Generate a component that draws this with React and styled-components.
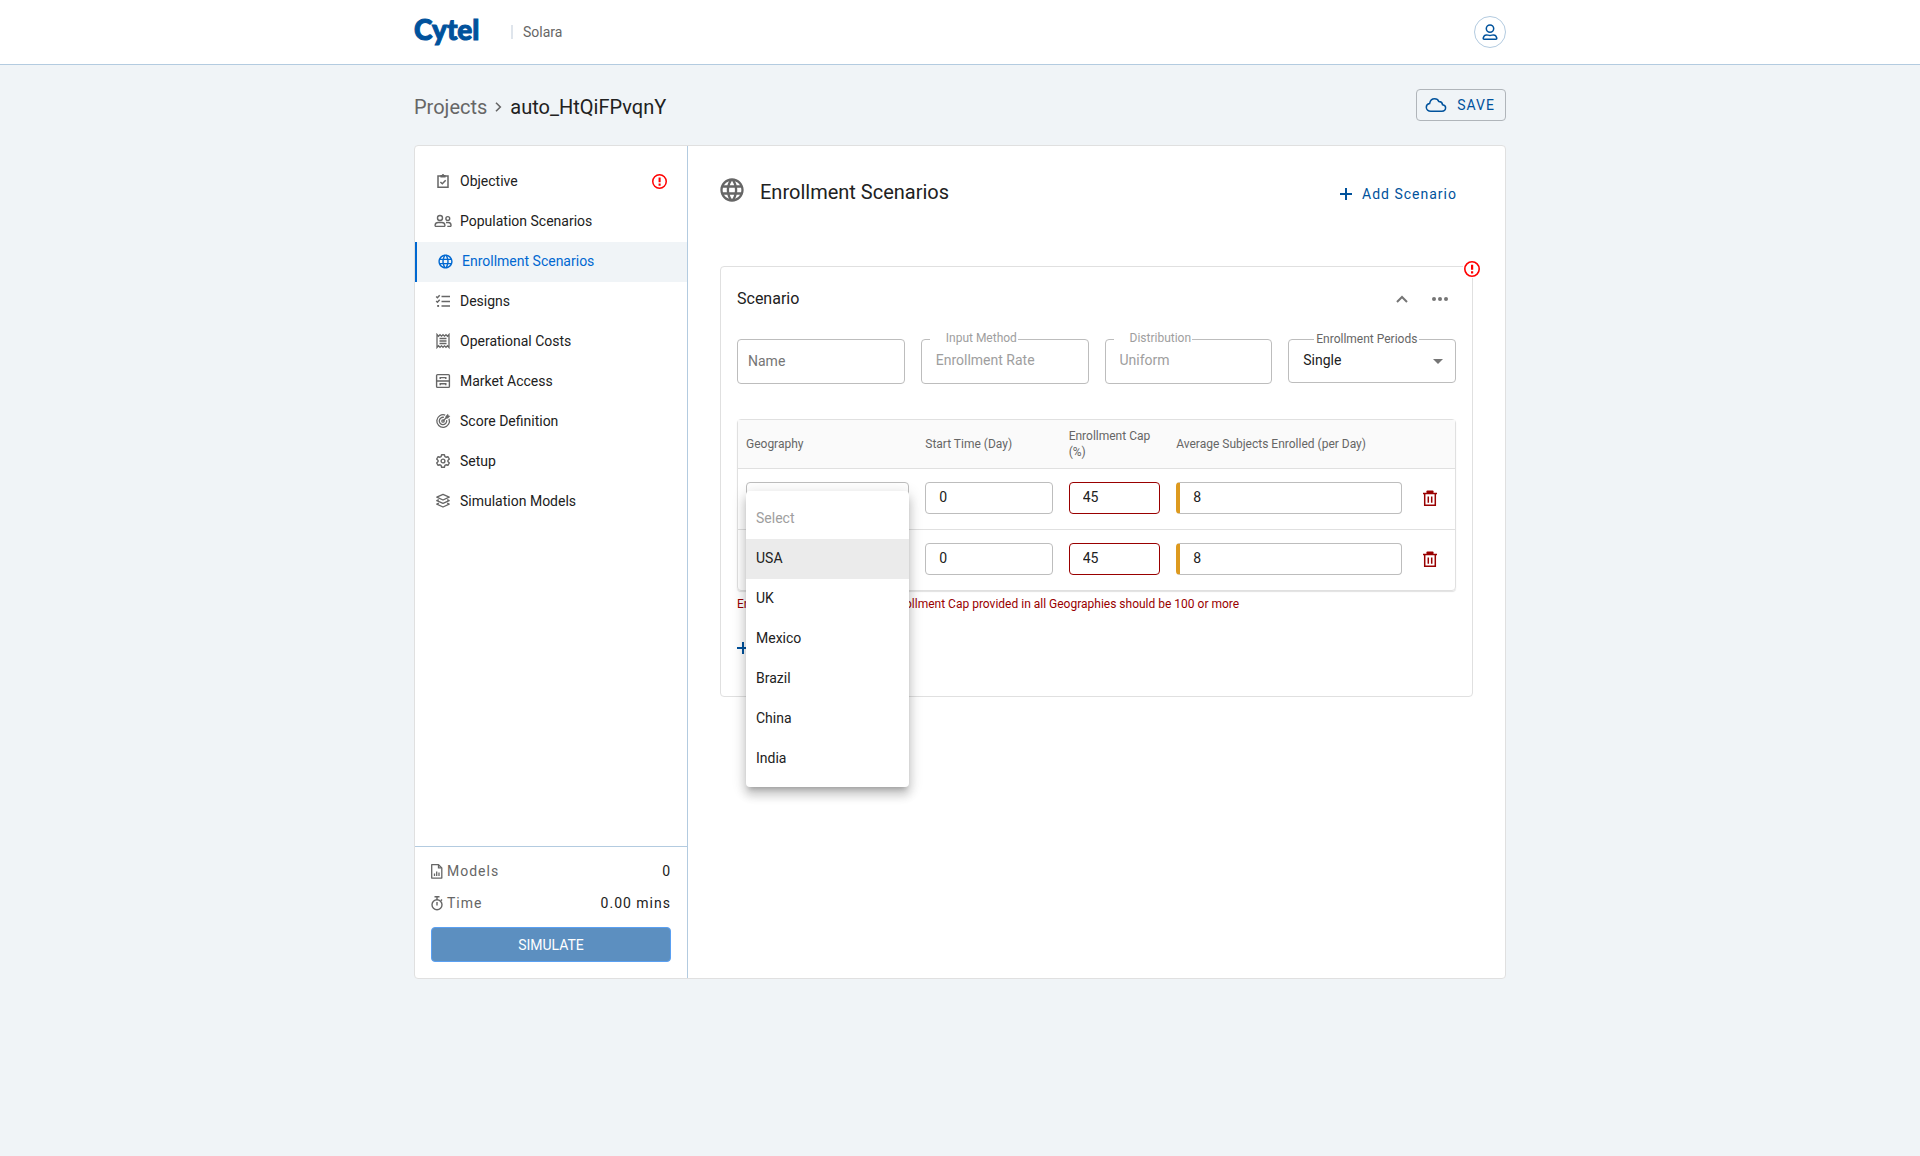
import React from "react";
import styled, { createGlobalStyle, css } from "styled-components";
import { MdLanguage } from "react-icons/md";

const c = {
  blue: "#00529c",
  link: "#0068d1",
  line: "#b3cbe0",
  soft: "#e0e0e0",
  field: "#bdbdbd",
  ink: "#212121",
  grey: "#666666",
  pale: "#9e9e9e",
  page: "#f0f4f7",
  danger: "#990000",
  alert: "#ff0000",
};

const GlobalStyle = createGlobalStyle`
  *, *::before, *::after { box-sizing: border-box; }
  body {
    margin: 0;
    background: ${c.page};
    color: ${c.ink};
    font: 14px/20px Roboto, "Liberation Sans", sans-serif;
  }
  button, input, select { font: inherit; color: inherit; margin: 0; }
  button { background: none; border: 0; padding: 0; cursor: pointer; }
  svg { display: block; flex: none; }
`;

const TopBar = styled.header`
  background: #fff;
  border-bottom: 1px solid ${c.line};
`;

const Container = styled.div`
  width: 100%;
  max-width: 1092px;
  margin: 0 auto;
`;

const TopBarInner = styled(Container)`
  display: flex;
  align-items: center;
  height: 64px;
`;

const Logo = styled.a`
  width: 97px;
  padding-bottom: 6px;
  color: ${c.blue};
  font: 900 28px/32px Lato, sans-serif;
  -webkit-text-stroke: 1px ${c.blue};
  text-decoration: none;
`;

const Product = styled.span`
  border-left: 2px solid #dfe5ec;
  padding-left: 10px;
  line-height: 14px;
  color: ${c.grey};
`;

const Avatar = styled.button`
  display: grid;
  place-items: center;
  width: 32px;
  height: 32px;
  margin-left: auto;
  border: 1px solid ${c.line};
  border-radius: 50%;
  color: ${c.blue};
`;

const TitleRow = styled(Container)`
  display: flex;
  justify-content: space-between;
  padding: 24px 0;
`;

const Breadcrumb = styled.nav`
  display: flex;
  align-items: center;
  gap: 8px;
  padding-top: 3px;
  font-size: 20px;
  line-height: 24px;
  color: ${c.grey};
`;

const CrumbLink = styled.a`
  color: inherit;
  text-decoration: none;
`;

const Crumb = styled.span`
  color: ${c.ink};
`;

const SaveButton = styled.button`
  display: flex;
  align-items: center;
  gap: 10px;
  height: 32px;
  padding: 0 10px 0 8px;
  border: 1px solid #b0b5ba;
  border-radius: 4px;
  color: ${c.blue};
  letter-spacing: 1px;
`;

const Card = styled(Container)`
  display: flex;
  min-height: calc(100vh - 322px);
  background: #fff;
  border: 1px solid ${c.soft};
  border-radius: 4px;
`;

const Sidebar = styled.aside`
  display: flex;
  flex: none;
  flex-direction: column;
  justify-content: space-between;
  width: 273px;
  border-right: 1px solid ${c.line};
`;

const NavList = styled.nav`
  display: flex;
  flex-direction: column;
  padding-top: 16px;
`;

const NavItem = styled.a`
  display: flex;
  align-items: center;
  gap: 7px;
  height: 40px;
  padding: 0 20px 2px 18px;
  color: ${c.ink};
  text-decoration: none;
  ${(p) =>
    p.$active &&
    css`
      border-left: 2px solid ${c.link};
      background: ${c.page};
      color: ${c.link};
    `}
`;

const NavIcon = styled.span`
  display: grid;
  place-items: center;
  width: 20px;
  color: ${(p) => (p.$active ? c.link : c.grey)};
`;

const NavLabel = styled.span`
  flex: 1;
`;

const Summary = styled.div`
  padding: 8px 16px 16px;
  border-top: 1px solid ${c.line};
`;

const SummaryRow = styled.div`
  display: flex;
  align-items: center;
  gap: 4px;
  height: 32px;
  color: ${c.grey};
  letter-spacing: 1px;
`;

const SummaryValue = styled.span`
  margin-left: auto;
  color: ${c.ink};
`;

const SimulateButton = styled.button`
  width: 100%;
  height: 35px;
  margin-top: 8px;
  border: 1px solid #5aa0f2;
  border-radius: 4px;
  background: #5c8fc0;
  color: #fff;
`;

const Main = styled.main`
  flex: 1;
  min-width: 0;
  padding: 32px;
`;

const MainHeader = styled.div`
  display: flex;
  gap: 16px;
  height: 28px;
  margin-bottom: 60px;
  padding-right: 16px;
  color: ${c.grey};
`;

const HeadingIcon = styled(MdLanguage)`
  width: 28px;
  height: 28px;
  margin: -2px;
`;

const Heading = styled.h1`
  flex: 1;
  margin: 0;
  color: ${c.ink};
  font-size: 20px;
  font-weight: 400;
  line-height: 28px;
`;

const AddButton = styled.button`
  display: flex;
  align-items: center;
  gap: 10px;
  height: 32px;
  color: ${c.blue};
  letter-spacing: 1px;
`;

const Panel = styled.section`
  position: relative;
  padding: 16px 16px 32px;
  border: 1px solid ${c.soft};
  border-radius: 4px;
`;

const AlertBadge = styled.span`
  position: absolute;
  top: -7px;
  right: -9px;
  padding: 1px;
  background: #fff;
`;

const PanelHeader = styled.div`
  display: flex;
  align-items: center;
  gap: 14px;
  height: 32px;
  margin-bottom: 24px;
  padding-right: 4px;
  color: ${c.grey};
`;

const PanelTitle = styled.h2`
  flex: 1;
  margin: 0;
  color: ${c.ink};
  font-size: 16px;
  font-weight: 400;
`;

const IconButton = styled.button`
  display: grid;
  place-items: center;
  width: 24px;
  height: 24px;
  color: ${(p) => p.$color || "#757575"};
`;

const Fields = styled.div`
  display: grid;
  grid-template-columns: repeat(4, 1fr);
  gap: 16px;
  align-items: start;
  margin-bottom: 35px;
`;

const Field = styled.div`
  position: relative;
`;

const FieldLabel = styled.label`
  position: absolute;
  top: ${(p) => (p.$wide ? -8 : -9)}px;
  left: ${(p) => (p.$wide ? 26 : 9)}px;
  padding: ${(p) => (p.$wide ? "0 2px" : "0 1px 0 16px")};
  background: #fff;
  color: ${(p) => (p.$wide ? c.grey : c.pale)};
  font-size: 12px;
  line-height: 16px;
`;

const box = css`
  display: block;
  width: 100%;
  border: 1px solid ${c.field};
  border-radius: 4px;
  background: #fff;
  outline: 0;
  appearance: none;
`;

const FieldInput = styled.input`
  ${box}
  height: 45px;
  padding: ${(p) => (p.$empty ? "0 10px 2px" : "0 14px 4px")};
  color: ${c.pale};
  &::placeholder { color: #757575; opacity: 1; }
`;

const FieldSelect = styled.select`
  ${box}
  height: 44px;
  padding: 0 32px 2px 14px;
`;

const SelectArrow = styled.svg`
  position: absolute;
  right: 13px;
  top: 20px;
  fill: #757575;
  pointer-events: none;
`;

const TableFrame = styled.div`
  border: 1px solid ${c.soft};
  border-radius: 4px;
  box-shadow: 0 1px 1px rgba(0, 0, 0, 0.12);
`;

const Table = styled.table`
  width: 100%;
  border-spacing: 0;
  table-layout: fixed;
`;

const HeadCell = styled.th`
  width: ${(p) => p.$width};
  height: 49px;
  padding: 0 8px;
  border-bottom: 1px solid ${c.soft};
  background: #fafafa;
  color: ${c.grey};
  font-size: 12px;
  font-weight: 400;
  line-height: 16px;
  text-align: left;
`;

const Cell = styled.td`
  padding: 13px 8px 15px;
  tr:not(:last-child) > & { border-bottom: 1px solid ${c.soft}; }
`;

const MenuAnchor = styled.div`
  position: relative;
`;

const cellBox = css`
  ${box}
  height: 32px;
  padding: 0 13px 2px;
`;

const CellInput = styled.input`
  ${cellBox}
  ${(p) => p.$invalid && `border-color: ${c.danger};`}
  ${(p) => p.$marked && "border-left: 4px solid #dd9a1f;"}
`;

const CellSelect = styled.select`
  ${cellBox}
`;

const Menu = styled.ul`
  position: absolute;
  z-index: 2;
  top: 9px;
  left: 0;
  width: 100%;
  margin: 0;
  padding: 8px 0;
  border-radius: 4px;
  background: #fff;
  box-shadow: 0 5px 5px -3px rgba(0, 0, 0, 0.2),
    0 8px 10px 1px rgba(0, 0, 0, 0.14), 0 3px 14px 2px rgba(0, 0, 0, 0.12);
  list-style: none;
`;

const MenuItem = styled.li`
  height: 40px;
  padding: 0 10px;
  line-height: 39px;
  background: ${(p) => (p.$selected ? "#ebebeb" : "transparent")};
  color: ${(p) => (p.$disabled ? c.pale : c.ink)};
`;

const ErrorText = styled.p`
  margin: 5px 0 20px;
  color: ${c.danger};
  font-size: 12px;
  line-height: 16px;
`;

const Svg = ({ w = 16, h = 16, s = 1.2, children }) => (
  <svg
    width={w}
    height={h}
    viewBox={`0 0 ${w} ${h}`}
    fill="none"
    stroke="currentColor"
    strokeWidth={s}
    aria-hidden="true"
  >
    {children}
  </svg>
);

const ClipboardIcon = () => (
  <Svg s={1.5}>
    <path d="M3 3h10v11.3H3z" />
    <path d="M5.4 1.900h1.400a1.300 1.300 0 0 1 2.400 0h1.400v2.500H5.400z" fill="currentColor" stroke="none" />
    <path d="M5.400 9l1.900 1.800 3.400-3.600" />
  </Svg>
);

const PeopleIcon = () => (
  <Svg w={18} s={1.400}>
    <circle cx="6" cy="5" r="2.500" />
    <path d="M2.200 13.400c-.9 0-1.200-.4-1.100-1.200C1.300 10.300 2.500 9.500 4.200 9.500h3.600c1.700 0 2.900.8 3.100 2.700.1.800-.2 1.200-1.100 1.200z" />
    <circle cx="13.800" cy="5.500" r="1.900" />
    <path d="M12 9.500h2.300c1.600 0 2.600.8 2.700 2.500.1.900-.2 1.400-1 1.400h-2.700" />
  </Svg>
);

const ChecklistIcon = () => (
  <Svg s={1.500}>
    <path d="M6.500 3.500h8.500M6.500 8.500h8.500M6.500 13h8.500" />
    <path d="M1.200 3.500l1.200 1.200L4.700 2.200M1.200 8l1.200 1.200 2.300-2.500" />
    <path d="M2.200 12h1.900v1.900H2.200z" fill="currentColor" stroke="none" />
  </Svg>
);

const ReceiptIcon = () => (
  <Svg s={1.300}>
    <path d="M2 1.500l1.500 1.700L5 1.700l1.500 1.500L8 1.700l1.500 1.500L11 1.700l1.500 1.500L14 1.500v13l-1.500-1.700-1.500 1.500-1.500-1.500L8 14.300l-1.500-1.500L5 14.300l-1.500-1.500L2 14.500z" />
    <path d="M4.500 5.500h7M4.500 8h7M4.500 10.500h7" />
  </Svg>
);

const CabinetIcon = () => (
  <Svg s={1.400}>
    <rect x="1.600" y="1.600" width="12.800" height="12.800" rx="1" />
    <path d="M1.600 8h12.800M5.200 6V4.600h5.600V6M5.200 12.200v-1.400h5.600v1.400" />
  </Svg>
);

const TargetIcon = () => (
  <Svg s={1.300}>
    <path d="M14 5.800A6.300 6.300 0 1 1 10.200 2.100" />
    <path d="M11.600 7.200A3.700 3.700 0 1 1 8.900 4.400" />
    <circle cx="8" cy="8" r="1.200" />
    <path d="M8 8l4-4" />
    <path d="M10.500 3.200l2.500-2.500.5 1.800 1.800.5-2.500 2.500h-2.300z" fill="currentColor" stroke="none" />
  </Svg>
);

const GearIcon = () => (
  <Svg s={1.400}>
    <path d="M6.600 1.700h2.800l.5 1.900 1.100.6 1.900-.5 1.400 2.300-1.400 1.400v1.200l1.400 1.400-1.400 2.300-1.900-.5-1.100.6-.5 1.900H6.600l-.5-1.900-1.100-.6-1.900.5L1.700 10l1.400-1.400V7.400L1.700 6l1.400-2.300 1.900.5 1.100-.6z" strokeLinejoin="round" />
    <circle cx="8" cy="8" r="1.900" />
  </Svg>
);

const StackIcon = () => (
  <Svg s={1.300}>
    <path d="M8 1.400l6.200 2.800L8 7 1.800 4.200z" strokeLinejoin="round" />
    <path d="M3.800 6.600l-2 1L8 10.400l6.200-2.800-2-1M3.800 10.100l-2 1L8 14l6.200-2.900-2-1" strokeLinejoin="round" />
  </Svg>
);

const ReportIcon = () => (
  <Svg w={12} h={15} s={1.300}>
    <path d="M.7.7h6.800l3.300 3.200v10.200H.7z" strokeLinejoin="round" />
    <path d="M7.500.7v3.200h3.300" />
    <path d="M3.500 12V9.500M5.700 12V7.500M8 12V8.500" />
  </Svg>
);

const StopwatchIcon = () => (
  <Svg w={12} h={15} s={1.400}>
    <circle cx="6" cy="8.700" r="5" />
    <path d="M3.500.8h5M6 .8v3M6 6v3.400M9.800 4.800l1.200-1.200" />
  </Svg>
);

const UserIcon = () => (
  <Svg s={1.5}>
    <circle cx="8" cy="4.600" r="3.700" />
    <path d="M2.200 15.200c-.9 0-1.100-.5-.9-1.400.5-1.900 1.500-2.900 3.100-2.900 1.200 0 2.200.5 3.600.5s2.400-.5 3.600-.5c1.600 0 2.600 1 3.100 2.900.2.900 0 1.400-.9 1.400z" />
  </Svg>
);

const CloudIcon = () => (
  <Svg w={22} s={1.5}>
    <path d="M5.800 14.200C3.200 14.200 1.300 12.500 1.300 10.300c0-2 1.400-3.300 3.300-3.700C5.200 3.600 7 1.800 9.600 1.800c2.100 0 3.500 1 4.300 2.800 2.300.1 3.500 1.300 3.700 3.200 1.800.3 3 1.400 3 3 0 2-1.500 3.400-3.800 3.400z" />
  </Svg>
);

const PlusIcon = () => (
  <Svg w={12} h={12} s={2}>
    <path d="M6 0v12M0 6h12" />
  </Svg>
);

const TrashIcon = () => (
  <Svg s={1.500}>
    <path d="M1 3.500h14" />
    <path d="M4.500 3V1.300Q4.500.5 5.300.5h5.400q.8 0 .8.800V3z" fill="currentColor" stroke="none" />
    <path d="M2.700 3.500v11.700h10.600V3.500M6.300 6.500v6.200M9.700 6.500v6.200" />
  </Svg>
);

const ErrorIcon = ({ size }) => (
  <svg width={size} height={size} viewBox="0 0 16 16" role="img" aria-label="Error">
    <circle cx="8" cy="8" r="7.200" fill="none" stroke={c.alert} strokeWidth="1.600" />
    <path d="M7 3.800h2.200v5H7zM7 10.200h2.200v2.200H7z" fill={c.alert} />
  </svg>
);

const navItems = [
  { label: "Objective", icon: <ClipboardIcon />, error: true },
  { label: "Population Scenarios", icon: <PeopleIcon /> },
  { label: "Enrollment Scenarios", icon: <MdLanguage size={17} />, active: true },
  { label: "Designs", icon: <ChecklistIcon /> },
  { label: "Operational Costs", icon: <ReceiptIcon /> },
  { label: "Market Access", icon: <CabinetIcon /> },
  { label: "Score Definition", icon: <TargetIcon /> },
  { label: "Setup", icon: <GearIcon /> },
  { label: "Simulation Models", icon: <StackIcon /> },
];

const columns = [
  { label: "Geography", width: "25%" },
  { label: "Start Time (Day)", width: "20%" },
  { label: "Enrollment Cap (%)", width: "15%" },
  { label: "Average Subjects Enrolled (per Day)", width: "auto" },
  { label: "", width: "45px" },
];

const rows = [
  { start: "0", cap: "45", average: "8", open: true },
  { start: "0", cap: "45", average: "8" },
];

const countries = ["USA", "UK", "Mexico", "Brazil", "China", "India"];

function GeographyMenu() {
  return (
    <Menu role="listbox" aria-label="Geography">
      <MenuItem role="option" aria-disabled="true" $disabled>Select</MenuItem>
      {countries.map((name) => (
        <MenuItem
          key={name}
          role="option"
          aria-selected={name === "USA"}
          $selected={name === "USA"}
        >
          {name}
        </MenuItem>
      ))}
    </Menu>
  );
}

function GeographyRow({ row }) {
  return (
    <tr>
      <Cell>
        <MenuAnchor>
          <CellSelect aria-label="Geography" defaultValue="">
            <option value="" />
            {countries.map((name) => (
              <option key={name}>{name}</option>
            ))}
          </CellSelect>
          {row.open && <GeographyMenu />}
        </MenuAnchor>
      </Cell>
      <Cell>
        <CellInput aria-label="Start Time (Day)" defaultValue={row.start} />
      </Cell>
      <Cell>
        <CellInput aria-label="Enrollment Cap (%)" defaultValue={row.cap} $invalid />
      </Cell>
      <Cell>
        <CellInput aria-label="Average Subjects Enrolled (per Day)" defaultValue={row.average} $marked />
      </Cell>
      <Cell>
        <IconButton type="button" aria-label="Delete geography" $color={c.danger}>
          <TrashIcon />
        </IconButton>
      </Cell>
    </tr>
  );
}

export default function App() {
  return (
    <>
      <GlobalStyle />
      <TopBar>
        <TopBarInner>
          <Logo href="#">Cytel</Logo>
          <Product>Solara</Product>
          <Avatar type="button" aria-label="Account">
            <UserIcon />
          </Avatar>
        </TopBarInner>
      </TopBar>

      <TitleRow>
        <Breadcrumb aria-label="Breadcrumb">
          <CrumbLink href="#">Projects</CrumbLink>
          <Svg w={7} h={10} s={1.6}>
            <path d="M1 .7l4.300 4.300L1 9.300" />
          </Svg>
          <Crumb>auto_HtQiFPvqnY</Crumb>
        </Breadcrumb>
        <SaveButton type="button">
          <CloudIcon />
          SAVE
        </SaveButton>
      </TitleRow>

      <Card>
        <Sidebar>
          <NavList aria-label="Project sections">
            {navItems.map((item) => (
              <NavItem key={item.label} href="#" $active={item.active}>
                <NavIcon $active={item.active}>{item.icon}</NavIcon>
                <NavLabel>{item.label}</NavLabel>
                {item.error && <ErrorIcon size={15} />}
              </NavItem>
            ))}
          </NavList>
          <Summary>
            <SummaryRow>
              <ReportIcon />
              Models
              <SummaryValue>0</SummaryValue>
            </SummaryRow>
            <SummaryRow>
              <StopwatchIcon />
              Time
              <SummaryValue>0.00 mins</SummaryValue>
            </SummaryRow>
            <SimulateButton type="button">SIMULATE</SimulateButton>
          </Summary>
        </Sidebar>

        <Main>
          <MainHeader>
            <HeadingIcon />
            <Heading>Enrollment Scenarios</Heading>
            <AddButton type="button">
              <PlusIcon />
              Add Scenario
            </AddButton>
          </MainHeader>

          <Panel>
            <AlertBadge>
              <ErrorIcon size={16} />
            </AlertBadge>
            <PanelHeader>
              <PanelTitle>Scenario</PanelTitle>
              <IconButton type="button" aria-label="Collapse scenario">
                <Svg w={12} h={8} s={2}>
                  <path d="M1 7l5-5 5 5" />
                </Svg>
              </IconButton>
              <IconButton type="button" aria-label="More actions">
                <svg width="16" height="4" viewBox="0 0 16 4" fill="currentColor" aria-hidden="true">
                  <circle cx="2" cy="2" r="2" />
                  <circle cx="8" cy="2" r="2" />
                  <circle cx="14" cy="2" r="2" />
                </svg>
              </IconButton>
            </PanelHeader>

            <Fields>
              <Field>
                <FieldInput aria-label="Name" placeholder="Name" $empty />
              </Field>
              <Field>
                <FieldLabel htmlFor="input-method">Input Method</FieldLabel>
                <FieldInput id="input-method" defaultValue="Enrollment Rate" disabled />
              </Field>
              <Field>
                <FieldLabel htmlFor="distribution">Distribution</FieldLabel>
                <FieldInput id="distribution" defaultValue="Uniform" disabled />
              </Field>
              <Field>
                <FieldLabel htmlFor="periods" $wide>Enrollment Periods</FieldLabel>
                <FieldSelect id="periods" defaultValue="Single">
                  <option>Single</option>
                  <option>Multiple</option>
                </FieldSelect>
                <SelectArrow width="10" height="5" viewBox="0 0 10 5" aria-hidden="true">
                  <path d="M0 0h10L5 5z" />
                </SelectArrow>
              </Field>
            </Fields>

            <TableFrame>
              <Table>
                <thead>
                  <tr>
                    {columns.map((col) => (
                      <HeadCell key={col.width} scope="col" $width={col.width}>
                        {col.label}
                      </HeadCell>
                    ))}
                  </tr>
                </thead>
                <tbody>
                  {rows.map((row, i) => (
                    <GeographyRow key={i} row={row} />
                  ))}
                </tbody>
              </Table>
            </TableFrame>
            <ErrorText>
              Enrollment Cap: The sum of Enrollment Cap provided in all Geographies should be 100 or more
            </ErrorText>
            <AddButton type="button">
              <PlusIcon />
              Add Geography
            </AddButton>
          </Panel>
        </Main>
      </Card>
    </>
  );
}
